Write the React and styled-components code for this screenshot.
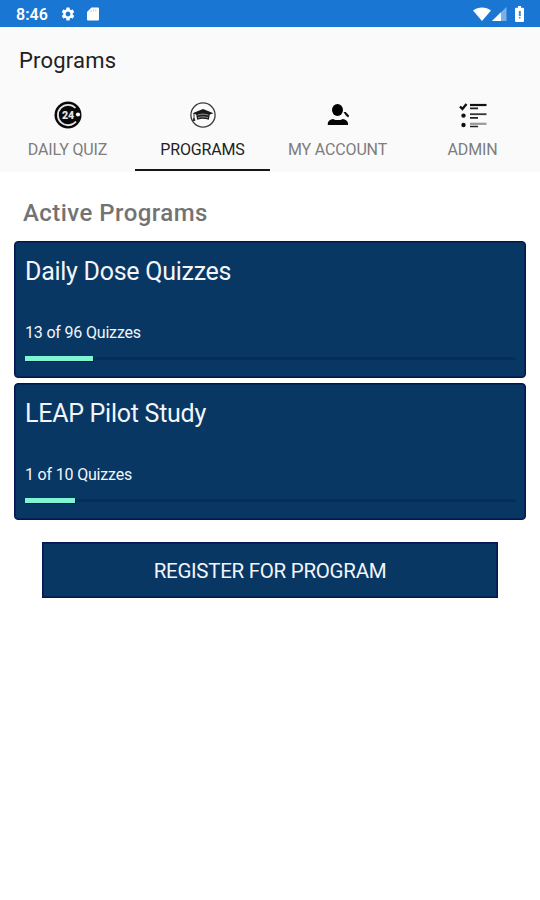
import React from 'react';
import styled, { createGlobalStyle } from 'styled-components';
import { MdSettings } from 'react-icons/md';

const GlobalStyle = createGlobalStyle`
  * {
    box-sizing: border-box;
  }
  body {
    margin: 0;
    background-color: #ffffff;
    font-family: Roboto, 'Liberation Sans', sans-serif;
  }
`;

const Screen = styled.div`
  width: 540px;
  height: 900px;
  overflow: hidden;
  background-color: #ffffff;
`;

const StatusBar = styled.div`
  display: flex;
  align-items: center;
  height: 27px;
  padding: 0 16px;
  background-color: #1976d2;
  color: #ffffff;

  svg {
    display: block;
  }
`;

const Clock = styled.span`
  width: 44px;
  font-size: 16px;
  font-weight: 600;
  line-height: 27px;
  padding-top: 1px;
`;

const StatusGroup = styled.div`
  display: flex;
  align-items: center;
  gap: ${({ $gap }) => $gap};
  margin-left: ${({ $end }) => ($end ? 'auto' : '0')};
`;

const Header = styled.header`
  height: 145px;
  background-color: #fafafa;
`;

const AppTitle = styled.h1`
  margin: 0;
  height: 67px;
  padding: 1px 0 0 19px;
  font-size: 22px;
  font-weight: 400;
  letter-spacing: 0.2px;
  line-height: 66px;
  color: #212121;
`;

const Tabs = styled.nav`
  display: grid;
  grid-template-columns: repeat(4, 1fr);
  height: 78px;
`;

const Tab = styled.button`
  display: flex;
  flex-direction: column;
  align-items: center;
  height: 77px;
  padding: 7px 0 0;
  border: 0;
  border-bottom: 2px solid ${({ $active }) => ($active ? '#17171b' : 'transparent')};
  background: none;
  font-family: inherit;
  font-size: 16px;
  font-weight: 400;
  letter-spacing: -0.15px;
  line-height: 20px;
  color: ${({ $active }) => ($active ? '#222222' : '#7d7d7d')};

  svg {
    display: block;
    flex: none;
    margin-bottom: 11px;
  }
`;

const Content = styled.main`
  padding: 0 14px;
`;

const SectionTitle = styled.h2`
  margin: 0;
  height: 69px;
  padding: 13px 0 0 9px;
  font-size: 24px;
  font-weight: 500;
  letter-spacing: 0.45px;
  line-height: 56px;
  color: #737373;
`;

const CardList = styled.div`
  display: flex;
  flex-direction: column;
  gap: 5px;
`;

const Card = styled.section`
  height: 137px;
  padding: 12px 10px 0;
  border: 1px solid #041650;
  border-radius: 4px;
  box-shadow: inset 0 0 0 1px #062659;
  background-color: #083763;
  color: #f3f5fa;
`;

const CardTitle = styled.h3`
  margin: 0;
  font-size: 25px;
  font-weight: 400;
  letter-spacing: -0.27px;
  line-height: 36px;
`;

const CardCount = styled.p`
  margin: 33px 0 13px;
  font-size: 16px;
  font-weight: 400;
  letter-spacing: -0.18px;
  line-height: 20px;
`;

const Track = styled.div`
  display: flex;
  align-items: center;
  height: 5px;
  width: 491px;
  background: linear-gradient(#083763 0 1px, #062f56 1px 4px, #083763 4px);
`;

const Fill = styled.div`
  height: 5px;
  background-color: #80f5d5;
  box-shadow: 1px 1px 0 #042050;
`;

const RegisterButton = styled.button`
  display: block;
  width: 456px;
  height: 56px;
  margin: 22px auto 0;
  padding: 2px 0 0;
  border: 1px solid #041650;
  box-shadow: inset 0 0 0 1px #062659;
  background-color: #083763;
  color: #f3f5fa;
  font-family: inherit;
  font-size: 20.5px;
  font-weight: 400;
  letter-spacing: -0.28px;
`;

const IconText = styled.text`
  font-family: Roboto, sans-serif;
  font-size: 10px;
  font-weight: 900;
  fill: #e4e4e4;
`;

const SdCardIcon = () => (
  <svg width='12' height='14' viewBox='0 0 12 14'>
    <path d='M4.5.5H11a1 1 0 0 1 1 1v11a1 1 0 0 1-1 1H1a1 1 0 0 1-1-1V5z' fill='#ffffff' />
    <path d='M4 3v2M6.4 2.2v2.4M8.8 2.2v2.4' stroke='#a9cdf0' strokeWidth='0.9' />
  </svg>
);

const WifiIcon = () => (
  <svg width='18' height='14' viewBox='0 0 18 14'>
    <path d='M0 3.6C5.2-.5 12.8-.5 18 3.6L9 14z' fill='#ffffff' />
  </svg>
);

const SignalIcon = () => (
  <svg width='15' height='14' viewBox='0 0 15 14'>
    <path d='M0 14L14.5 0v14z' fill='#78b0e7' />
    <path d='M0 14L9 5.2V14z' fill='#ffffff' />
  </svg>
);

const BatteryIcon = () => (
  <svg width='9' height='16' viewBox='0 0 9 16'>
    <path d='M3 0h3v1.8h2a1 1 0 0 1 1 1V15a1 1 0 0 1-1 1H1a1 1 0 0 1-1-1V2.8a1 1 0 0 1 1-1h2z' fill='#ffffff' />
    <path d='M3.8 5h2v5h-2zM4 11h1.5v1.5H4z' fill='#3e8bd8' />
  </svg>
);

const DailyIcon = () => (
  <svg width='28' height='28' viewBox='0 0 28 28'>
    <circle cx='14' cy='14' r='13.5' fill='#090909' />
    <path d='M21.5 7A10.2 10.2 0 1 0 22 20.5' fill='none' stroke='#e6e6e6' strokeWidth='1.8' />
    <IconText x='8' y='17.5' textLength='12' lengthAdjust='spacingAndGlyphs'>24</IconText>
    <circle cx='24' cy='13.5' r='2.1' fill='#ffffff' />
  </svg>
);

const GraduationIcon = () => (
  <svg width='28' height='28' viewBox='0 0 28 28'>
    <circle cx='14' cy='14' r='12.1' fill='none' stroke='#3b3b3b' strokeWidth='1.3' />
    <path d='M14 8l10.5 4.2-3.7 1.4-1 5.2c-3.6-1.3-8-1.3-11.6 0l-1-5.2-3.7-1.4z' fill='#191919' />
    <path d='M8.5 14.2c3.5-1.4 7.5-1.4 11 0M9 16.7c3.2-1.2 6.8-1.2 10 0' fill='none' stroke='#a8a8a8' strokeWidth='0.9' />
    <path d='M5 12.5v4.5M5 17l-1 2.5h2z' fill='#222222' stroke='#222222' strokeWidth='0.9' />
  </svg>
);

const AccountIcon = () => (
  <svg width='28' height='28' viewBox='0 0 28 28'>
    <ellipse cx='13.5' cy='9' rx='5.5' ry='6' fill='#000000' />
    <path d='M3.8 24v-1.5c0-2.3 2.5-4 5.3-4.5l2.2 1.1h5.2l2.2-1.1c2.8.5 5.3 2.2 5.3 4.5V24z' fill='#060606' />
    <path d='M19.5 11l2.300.1 3.400 3.700-1.100 1.700-2.300-2z' fill='#111111' />
  </svg>
);

const ChecklistIcon = () => (
  <svg width='28' height='28' viewBox='0 0 28 28'>
    <path d='M1 5.5l2.400 2.400L7.500 3' fill='none' stroke='#111111' strokeWidth='2.4' />
    <circle cx='4.500' cy='14.600' r='2.2' fill='#111111' />
    <circle cx='4.500' cy='24' r='2.2' fill='#111111' />
    <path d='M11 4h16.5' stroke='#111111' strokeWidth='2.2' />
    <path d='M11 13.2h16.5' stroke='#333333' strokeWidth='1.8' />
    <path d='M11 22.8h16.5' stroke='#999999' strokeWidth='2.2' />
    <path d='M11 7.400h8M11 16.800h8M11 25.500h8' stroke='#222222' strokeWidth='1.7' />
  </svg>
);

const tabs = [
  { label: 'DAILY QUIZ', icon: <DailyIcon /> },
  { label: 'PROGRAMS', icon: <GraduationIcon />, active: true },
  { label: 'MY ACCOUNT', icon: <AccountIcon /> },
  { label: 'ADMIN', icon: <ChecklistIcon /> },
];

const programs = [
  { name: 'Daily Dose Quizzes', count: '13 of 96 Quizzes', progress: 68 },
  { name: 'LEAP Pilot Study', count: '1 of 10 Quizzes', progress: 50 },
];

const App = () => (
  <>
    <GlobalStyle />
    <Screen>
      <StatusBar>
        <Clock>8:46</Clock>
        <StatusGroup $gap='11px'>
          <MdSettings size={16} />
          <SdCardIcon />
        </StatusGroup>
        <StatusGroup $gap='8px' $end>
          <StatusGroup $gap='1px'>
            <WifiIcon />
            <SignalIcon />
          </StatusGroup>
          <BatteryIcon />
        </StatusGroup>
      </StatusBar>
      <Header>
        <AppTitle>Programs</AppTitle>
        <Tabs>
          {tabs.map((tab) => (
            <Tab key={tab.label} $active={tab.active}>
              {tab.icon}
              {tab.label}
            </Tab>
          ))}
        </Tabs>
      </Header>
      <Content>
        <SectionTitle>Active Programs</SectionTitle>
        <CardList>
          {programs.map((program) => (
            <Card key={program.name}>
              <CardTitle>{program.name}</CardTitle>
              <CardCount>{program.count}</CardCount>
              <Track>
                <Fill style={{ width: `${program.progress}px` }} />
              </Track>
            </Card>
          ))}
        </CardList>
        <RegisterButton>REGISTER FOR PROGRAM</RegisterButton>
      </Content>
    </Screen>
  </>
);

export default App;
